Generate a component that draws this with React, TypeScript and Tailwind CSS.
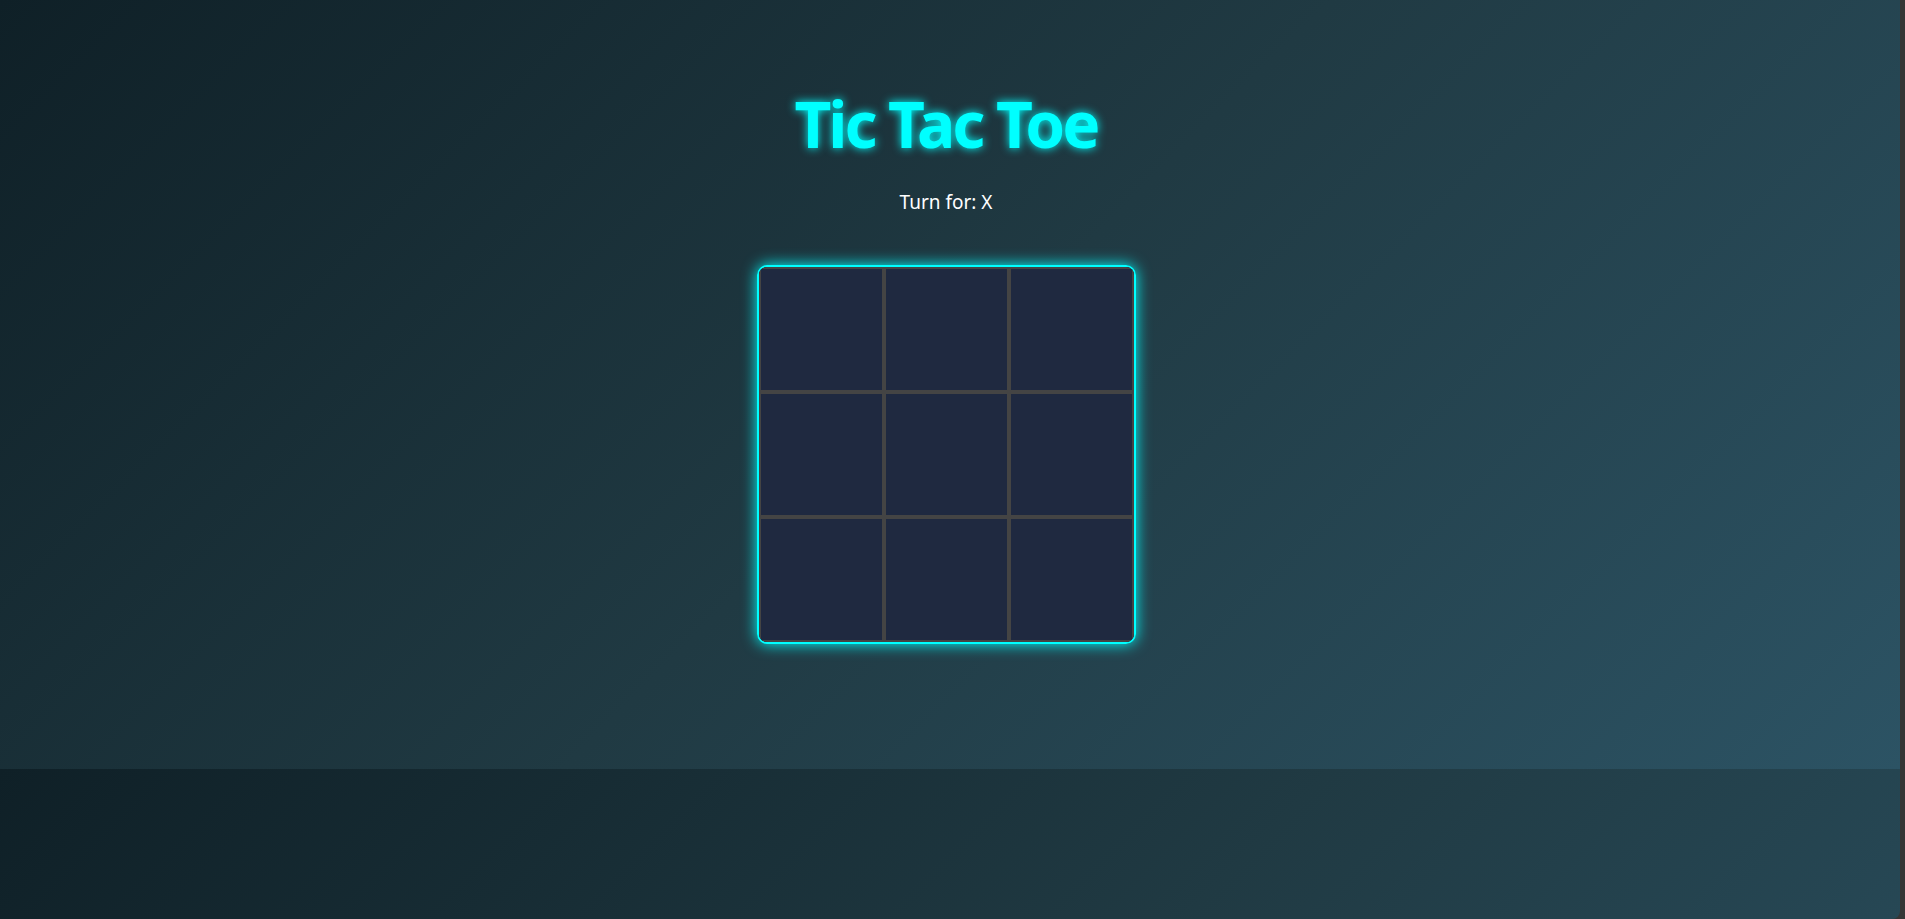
import React, { useState } from 'react';

type Cell = 'X' | 'O' | null;

const App: React.FC = () => {
  const [cells, setCells] = useState<Cell[]>(Array(9).fill(null));
  const [turn, setTurn] = useState<'X' | 'O'>('X');

  const play = (i: number) => {
    if (cells[i]) return;
    const next = [...cells];
    next[i] = turn;
    setCells(next);
    setTurn(turn === 'X' ? 'O' : 'X');
  };

  return (
    <div className="flex h-[919px] w-full overflow-hidden bg-[#353535] font-['Noto_Sans',sans-serif]">
      <div className="flex h-full w-[1900px] flex-col items-center rounded-br-[8px] bg-[linear-gradient(135deg,#0f2027,#203a43,#2c5364)] bg-[length:100%_769px] bg-repeat-y pr-[8px] pt-[86px]">
        <h1 className="text-[64px] font-bold leading-[76px] tracking-[-3px] text-[#00ffff] [text-shadow:0_0_10px_#00ffff]">
          Tic Tac Toe
        </h1>
        <p className="mt-[26px] text-[19px] leading-[28px] text-white">Turn for: {turn}</p>

        <div className="mt-[49px] grid grid-cols-3 overflow-hidden rounded-[10px] border-2 border-[#00ffff] shadow-[0_0_15px_#00ffff]">
          {cells.map((c, i) => (
            <button
              key={i}
              onClick={() => play(i)}
              className="flex h-[125px] w-[125px] items-center justify-center border-2 border-[#444] bg-[#1f2940] text-[64px] font-bold text-[#00ffff]"
            >
              {c}
            </button>
          ))}
        </div>
      </div>
      <div className="h-full w-[5px]" />
    </div>
  );
};

export default App;
